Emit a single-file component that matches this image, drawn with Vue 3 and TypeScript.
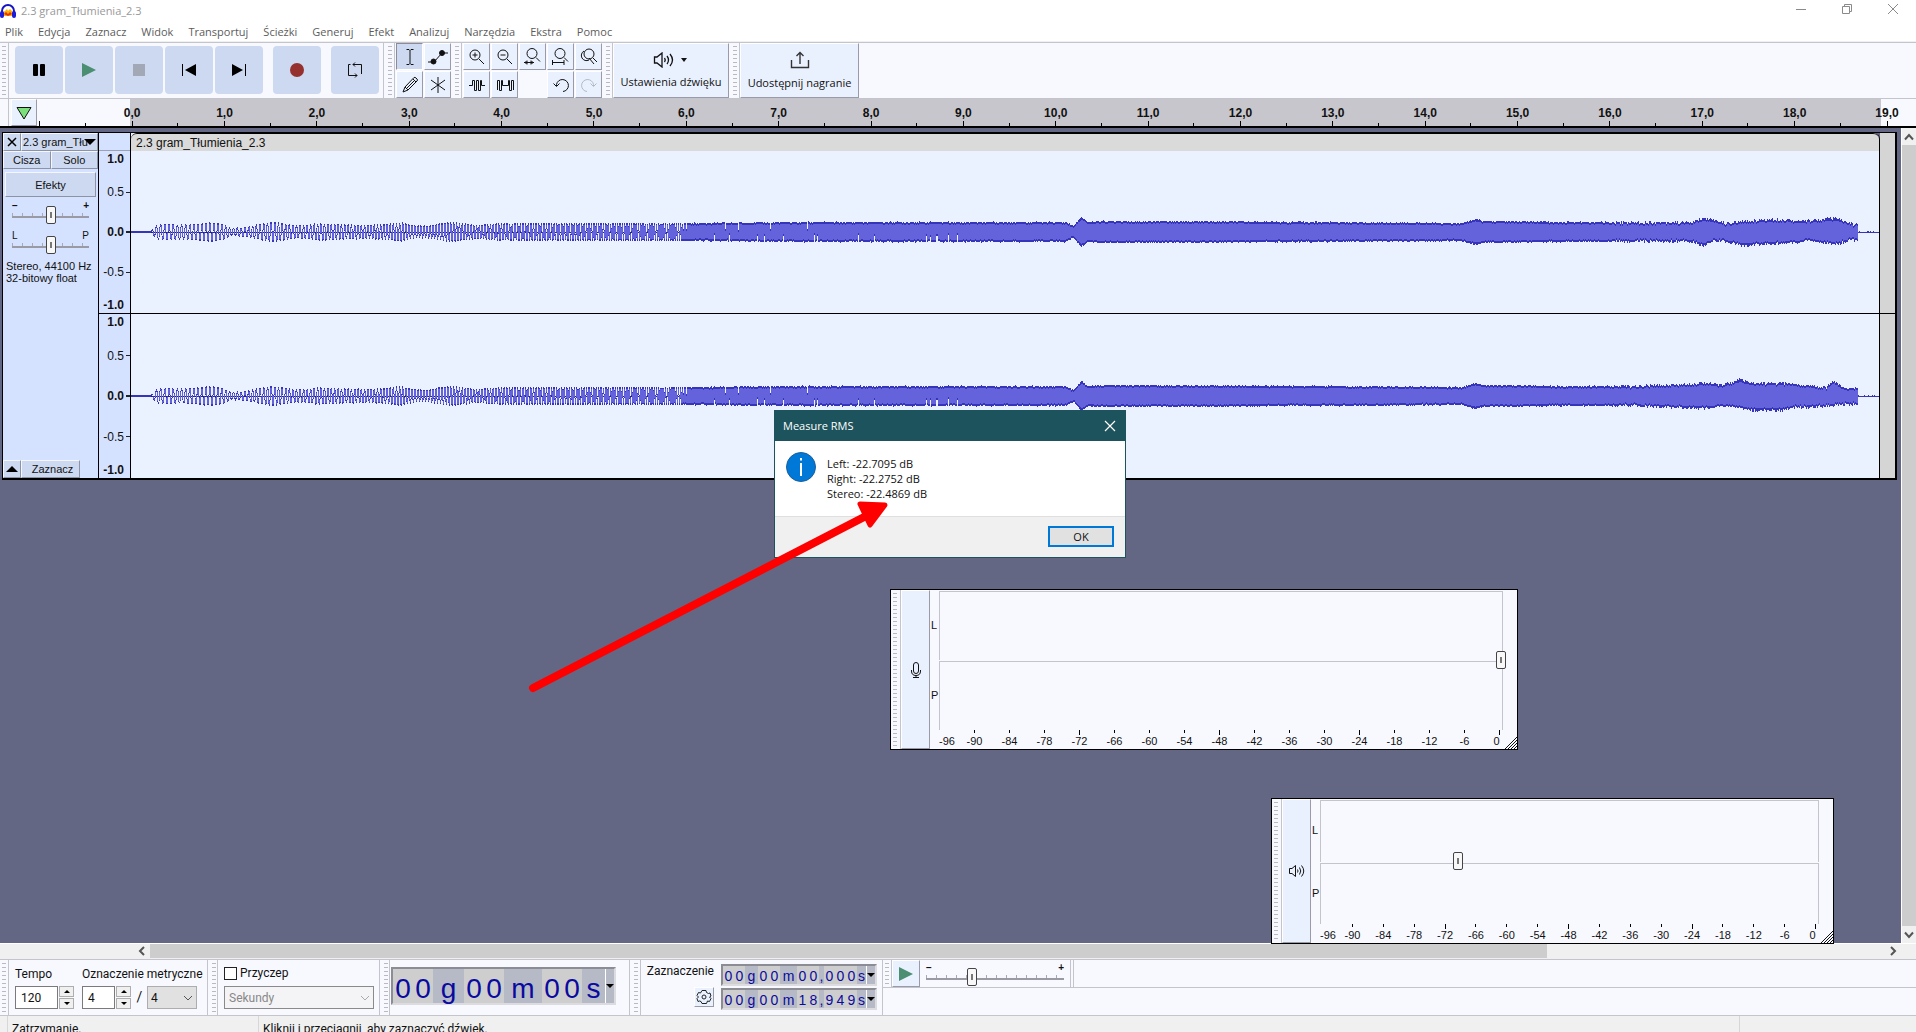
<script setup lang="ts">
import { ref } from 'vue'

type Point = [number, number]

const menus = ['Plik', 'Edycja', 'Zaznacz', 'Widok', 'Transportuj', 'Ścieżki', 'Generuj', 'Efekt', 'Analizuj', 'Narzędzia', 'Ekstra', 'Pomoc']
const seconds = Array.from({ length: 20 }, (_, i) => `${i},0`)
const decibels = Array.from({ length: 16 }, (_, i) => -90 + i * 6)
const levels = ['1.0', '0.5', '0.0', '-0.5', '-1.0']

const tempo = ref('120')
const beats = ref('4')
const recordLevel = ref(100)
const playLevel = ref(27)
const gain = ref(50)
const pan = ref(50)
const speed = ref(32)

const WAVE_WIDTH = 1748

const early: Point[] = [[0, 1], [19, 1], [21, 3], [26, 8], [60, 8], [80, 10], [92, 8], [100, 4], [115, 5], [128, 8], [138, 10], [150, 9], [162, 7], [175, 7], [188, 9], [205, 8], [235, 7], [255, 8], [270, 10], [280, 7], [296, 6], [310, 9], [322, 10], [345, 7], [370, 9], [500, 9], [569, 9], [669, 10], [934, 10], [942, 6], [950, 15], [957, 10], [969, 11], [1205, 10], [1330, 9], [1344, 13], [1352, 11], [1440, 10], [1500, 10]]
const upper1: Point[] = [...early, [1560, 10], [1572, 14], [1588, 11], [1594, 9], [1615, 11], [1625, 12], [1645, 13], [1655, 13], [1670, 11], [1689, 13], [1704, 14], [1714, 11], [1722, 8], [1726, 8]]
const lower1: Point[] = [...early, [1560, 10], [1572, 14], [1584, 9], [1600, 11], [1611, 14], [1645, 12], [1665, 11], [1676, 9], [1690, 11], [1705, 13], [1714, 10], [1719, 8], [1726, 9]]
const upper2: Point[] = [...early, [1550, 12], [1574, 14], [1588, 11], [1600, 14], [1609, 17], [1620, 13], [1660, 13], [1672, 11], [1695, 9], [1703, 16], [1710, 9], [1726, 8]]
const lower2: Point[] = [...early, [1550, 12], [1574, 13], [1588, 11], [1600, 11], [1621, 15], [1650, 15], [1665, 12], [1690, 11], [1704, 10], [1726, 8]]

function envelope(points: Point[], x: number): number {
  for (let i = 1; i < points.length; i++) {
    const [x1, y1] = points[i]
    if (x <= x1) {
      const [x0, y0] = points[i - 1]
      return y0 + ((y1 - y0) * (x - x0)) / (x1 - x0)
    }
  }
  return 1
}

function noise(n: number): number {
  const s = Math.sin(n * 12.9898) * 43758.5453
  return s - Math.floor(s)
}

// One column per pixel: a rising sweep whose cycles merge into a solid band.
function buildWave(up: Point[], down: Point[], middle: number, seed: number) {
  let peaks = ''
  let body = ''
  for (let x = 0; x < WAVE_WIDTH; x++) {
    let hi = 0
    let lo = 0
    if (x > 1726) {
      hi = noise(x + seed) > 0.8 ? 1 : 0
      lo = -1
    } else if (x < 20) {
      hi = 1
      lo = -1
    } else {
      hi = -1
      lo = 1
      if (x > 550) {
        hi = x < 700 && noise(x * 3) < 0.05 ? 0.3 : 1
        lo = x < 830 && noise(x * 5) < 0.04 ? -0.4 : -1
      } else {
        for (let k = 0; k <= 8; k++) {
          const t = x - 20 + k / 8
          const v = Math.sin((2 * Math.PI * (Math.exp(0.0013 * t) - 1)) / (4.3 * 0.0013))
          hi = Math.max(hi, v)
          lo = Math.min(lo, v)
        }
      }
      const rough = x > 1480 ? 3 : x > 560 ? 1.4 : 1
      hi = hi * envelope(up, x) + (hi > 0 ? (noise(x + seed) - 0.6) * rough : 0)
      lo = lo * envelope(down, x) - (lo < 0 ? (noise(x + seed + 400) - 0.6) * rough : 0)
      if (hi - lo < 1) hi = lo + 1
    }
    const top = Math.round(middle - hi)
    const bottom = Math.max(top + 1, Math.round(middle - lo))
    peaks += `M${x}.5 ${top}V${bottom}`
    const inset = x > 550 ? 2 : 1
    const cap = Math.round(envelope(up, x) * 0.82)
    const cup = Math.round(envelope(down, x) * 0.82)
    const a = Math.max(top + inset, middle - cap)
    const b = Math.min(bottom - inset, middle + cup)
    if (b > a && x <= 1726) body += `M${x}.5 ${a}V${b}`
  }
  return { peaks, body }
}

const channels = [
  { id: 'left', height: 162, middle: 81, ...buildWave(upper1, lower1, 81, 3) },
  { id: 'right', height: 164, middle: 82, ...buildWave(upper2, lower2, 82, 91) },
]

const bigTime = [
  { t: '00', u: 'g' },
  { t: '00', u: 'm' },
  { t: '00', u: 's' },
]
const selectionTimes = [
  { id: 'start', parts: [{ t: '00', u: 'g' }, { t: '00', u: 'm' }, { t: '00', u: ',' }, { t: '000', u: 's' }] },
  { id: 'end', parts: [{ t: '00', u: 'g' }, { t: '00', u: 'm' }, { t: '18', u: ',' }, { t: '949', u: 's' }] },
]
</script>

<template>
  <div class="app">
    <header class="titlebar">
      <svg class="logo" viewBox="0 0 16 16" width="16" height="16" aria-hidden="true">
        <path d="M3 9 5 8 7 6 8 8 10 6 13 9 13 13 3 13Z" fill="#ffb000" />
        <path d="M4 11 6 9 8 11 10 9 12 11 8 13Z" fill="#e33412" />
        <path d="M2 11V8a6 6 0 0 1 12 0v3" fill="none" stroke="#1414c8" stroke-width="2" />
        <rect x="0" y="8" width="4" height="7" rx="2" fill="#1c1cd8" />
        <rect x="12" y="8" width="4" height="7" rx="2" fill="#1c1cd8" />
      </svg>
      <span class="title">2.3 gram_Tłumienia_2.3</span>
      <div class="window-buttons">
        <button type="button" aria-label="Minimalizuj"><svg width="12" height="12" viewBox="0 0 12 12"><path d="M1 6.5H11" /></svg></button>
        <button type="button" aria-label="Przywróć"><svg width="12" height="12" viewBox="0 0 12 12"><path d="M1.500 3.500H8.500V10.500H1.500ZM3.500 3.500V1.500H10.500V8.500H8.500" /></svg></button>
        <button type="button" aria-label="Zamknij"><svg width="12" height="12" viewBox="0 0 12 12"><path d="M1 1 11 11M11 1 1 11" /></svg></button>
      </div>
    </header>

    <nav class="menubar">
      <button v-for="m in menus" :key="m" type="button">{{ m }}</button>
    </nav>

    <section class="toolbar">
      <span class="grip"></span>
      <div class="transport">
        <button type="button" aria-label="Pauza"><svg width="14" height="14" viewBox="0 0 14 14"><rect x="1" y="1" width="5" height="12" rx="1" /><rect x="8" y="1" width="5" height="12" rx="1" /></svg></button>
        <button type="button" aria-label="Odtwórz"><svg width="16" height="16" viewBox="0 0 16 16"><path d="M1 1 15 8 1 15Z" fill="#4b8e72" /></svg></button>
        <button type="button" aria-label="Zatrzymaj"><svg width="12" height="12" viewBox="0 0 12 12"><rect width="12" height="12" fill="#a2a8b6" /></svg></button>
        <button type="button" aria-label="Do początku"><svg width="14" height="12" viewBox="0 0 14 12"><path d="M0 0H1V12H0ZM14 0V12L3 6Z" /></svg></button>
        <button type="button" aria-label="Do końca"><svg width="14" height="12" viewBox="0 0 14 12"><path d="M13 0H14V12H13ZM0 0V12L11 6Z" /></svg></button>
        <button type="button" class="apart" aria-label="Nagraj"><svg width="14" height="14" viewBox="0 0 14 14"><circle cx="7" cy="7" r="7" fill="#96302f" /></svg></button>
        <button type="button" class="apart" aria-label="Pętla"><svg width="16" height="16" viewBox="0 0 16 16" fill="none" stroke="#111"><path d="M3.500 2.500H1.500V13.500H10M14.500 12V2.500H6M8 .5 6 2.500 8 4.500M8 11.500 10 13.500 8 15.500" /></svg></button>
      </div>
      <span class="grip double"></span>
      <div class="tools two">
        <button type="button" class="pressed" aria-label="Zaznaczanie"><svg width="20" height="20" viewBox="0 0 20 20"><path d="M6.500 2.500H9L10 3.500 11 2.500H13.500M10 3.500V16.500M6.500 17.500H9L10 16.500 11 17.500H13.500" /></svg></button>
        <button type="button" aria-label="Obwiednia"><svg width="20" height="20" viewBox="0 0 20 20"><path d="M0 15H6L14 6H20" /><circle cx="5.500" cy="14.500" r="2.500" fill="#111" /><circle cx="14" cy="6" r="2.500" fill="#111" /></svg></button>
        <button type="button" aria-label="Rysowanie"><svg width="20" height="20" viewBox="0 0 20 20"><path d="M3 17 5 12 14 2.500Q15 2 16 3L17 4Q18 5 17 6L8 15ZM13 4 16 7M5 12 8 15M6.500 13.500 14 6" /></svg></button>
        <button type="button" aria-label="Wielonarzędzie"><svg width="20" height="20" viewBox="0 0 20 20"><path d="M10 2V18M3 5 17 15M17 5 3 15" /></svg></button>
      </div>
      <span class="grip"></span>
      <div class="tools five">
        <button type="button" aria-label="Powiększ"><svg width="20" height="20" viewBox="0 0 20 20"><circle cx="8" cy="8" r="5" /><path d="M12 12 17 17M5.500 8H10.500M8 5.500V10.500" /></svg></button>
        <button type="button" aria-label="Pomniejsz"><svg width="20" height="20" viewBox="0 0 20 20"><circle cx="8" cy="8" r="5" /><path d="M12 12 17 17M5.500 8H10.500" /></svg></button>
        <button type="button" aria-label="Dopasuj zaznaczenie"><svg width="20" height="20" viewBox="0 0 20 20"><circle cx="9" cy="6.500" r="5" /><path d="M13 10.500 17 14.500M1 15.500H11M4 13.500V17.500M8 13.500V17.500M2.500 14 4 15.500 2.500 17M9.500 14 8 15.500 9.500 17" /></svg></button>
        <button type="button" aria-label="Dopasuj projekt"><svg width="20" height="20" viewBox="0 0 20 20"><circle cx="9" cy="6.500" r="5" /><path d="M13 10.500 17 14.500M1.500 15.500H13M1.500 13V18M13 13V18" /></svg></button>
        <button type="button" aria-label="Przełącz powiększenie"><svg width="20" height="20" viewBox="0 0 20 20"><circle cx="10" cy="7" r="5" /><path d="M14 11 18 15M5 4A5 5 0 1 0 10 13M10 11 15 17" /></svg></button>
        <button type="button" aria-label="Przytnij"><svg width="20" height="20" viewBox="0 0 20 20"><path d="M2 10.500H5.500V5.500H7.500V15.500H9.500V5.500H11.500V15.500H13.500V5.500H14.500V10.500H18" /></svg></button>
        <button type="button" aria-label="Wycisz"><svg width="20" height="20" viewBox="0 0 20 20"><path d="M2.500 15V5.500H4.500V15.500H6.500V5.500H7.500V10.500H13.500V5.500H14.500V15.500H16.500V5.500H18.500V15" /></svg></button>
        <span></span>
        <button type="button" aria-label="Cofnij"><svg width="20" height="20" viewBox="0 0 20 20"><path d="M12 16.500A6 6 0 1 0 5.500 9.500V11M2.500 8.500 5.500 11.500 8.500 8.500" /></svg></button>
        <button type="button" class="faded" aria-label="Ponów"><svg width="20" height="20" viewBox="0 0 20 20"><path d="M8 16.500A6 6 0 1 1 14.500 9.500V11M17.500 8.500 14.500 11.500 11.500 8.500" /></svg></button>
      </div>
      <span class="grip"></span>
      <button type="button" class="wide audio">
        <svg width="36" height="16" viewBox="0 0 36 16" fill="none" stroke="#111"><path d="M1.500 5V11H4L9 15V1L4 5Z" stroke-width="1.300" /><path d="M11.500 6Q13 8 11.500 10M14 4Q17 8 14 12M17 2Q22 8 17 14" stroke-width="1.300" /><path d="M28 6H34L31 10Z" fill="#111" stroke="none" /></svg>
        <span>Ustawienia dźwięku</span>
      </button>
      <span class="grip"></span>
      <button type="button" class="wide share">
        <svg width="20" height="18" viewBox="0 0 20 18" fill="none" stroke="#333"><path d="M1.500 9V16.500H18.500V9M10 13V1.500M6.500 5 10 1.500 13.500 5" stroke-width="1.400" /></svg>
        <span>Udostępnij nagranie</span>
      </button>
    </section>

    <section class="timeline">
      <span class="edge"></span>
      <button type="button" class="pin" aria-label="Głowica"><svg width="18" height="16" viewBox="0 0 18 16"><path d="M2 2.500H16L9 14Z" fill="#7be07b" stroke="#111" /></svg></button>
      <span class="lead"></span>
      <span v-for="s in seconds" :key="s" class="second">{{ s }}</span>
    </section>

    <main class="workspace">
      <div class="canvas">
        <article class="track">
          <aside class="panel">
            <div class="row top">
              <button type="button" class="close" aria-label="Zamknij ścieżkę"><svg width="10" height="10" viewBox="0 0 10 10"><path d="M1 1 9 9M9 1 1 9" stroke="#000" stroke-width="1.500" /></svg></button>
              <button type="button" class="name"><span>2.3 gram_Tłumienia_2.3</span><svg width="12" height="6" viewBox="0 0 12 6"><path d="M0 0H12L6 6Z" /></svg></button>
            </div>
            <div class="row halves">
              <button type="button">Cisza</button>
              <button type="button">Solo</button>
            </div>
            <button type="button" class="effects">Efekty</button>
            <label class="knob"><span class="ends"><b>−</b><b>+</b></span><input v-model="gain" type="range" class="slider" aria-label="Wzmocnienie" /></label>
            <label class="knob"><span class="ends"><span>L</span><span>P</span></span><input v-model="pan" type="range" class="slider" aria-label="Panorama" /></label>
            <p class="format">Stereo, 44100 Hz<br />32-bitowy float</p>
            <div class="row foot">
              <button type="button" class="close" aria-label="Zwiń"><svg width="12" height="6" viewBox="0 0 12 6"><path d="M0 6H12L6 0Z" /></svg></button>
              <button type="button" class="select">Zaznacz</button>
            </div>
          </aside>
          <div class="levels">
            <div class="gap"></div>
            <div v-for="c in channels" :key="c.id" class="scale" :class="c.id">
              <span v-for="(l, i) in levels" :key="l" :class="{ strong: i % 2 === 0 }">{{ l }}</span>
            </div>
          </div>
          <div class="clip">
            <div class="clip-title">2.3 gram_Tłumienia_2.3</div>
            <svg v-for="c in channels" :key="c.id" class="wave" :class="c.id" :viewBox="`0 0 ${WAVE_WIDTH} ${c.height}`" :height="c.height" preserveAspectRatio="none" shape-rendering="crispEdges">
              <path :d="`M0 ${c.middle}.5H560`" stroke="#22226e" />
              <path :d="c.peaks" stroke="#3634b8" />
              <path :d="c.body" stroke="#6463dc" />
            </svg>
          </div>
          <div class="after"><span></span></div>
        </article>

        <section class="meter recording">
          <span class="grip"></span>
          <button type="button" class="meter-button" aria-label="Poziom nagrywania">
            <svg width="14" height="18" viewBox="0 0 14 18" fill="none" stroke="#111"><rect x="4.500" y="1.500" width="5" height="11" rx="2.500" /><path d="M2.500 9V10Q2.500 14.500 7 14.500T11.500 10V9M7 14.500V16.500M4 16.500H10" /></svg>
          </button>
          <div class="names"><span>L</span><span>P</span></div>
          <div class="bars">
            <div class="bar"></div>
            <div class="bar"></div>
            <input v-model="recordLevel" type="range" class="slider bare" aria-label="Głośność nagrywania" />
            <div class="db"><span class="first">-96</span><span v-for="d in decibels" :key="d" class="tick" :class="{ long: d % 24 === 0 }">{{ d }}</span></div>
          </div>
          <svg class="corner" width="12" height="12" viewBox="0 0 12 12"><path d="M0 12 12 0M3 12 12 3M6 12 12 6M9 12 12 9" stroke="#111" /></svg>
        </section>

        <section class="meter playback">
          <span class="grip"></span>
          <button type="button" class="meter-button" aria-label="Poziom odtwarzania">
            <svg width="18" height="14" viewBox="0 0 18 14" fill="none" stroke="#111"><path d="M1.500 4.500V9.500H4L7.500 12.500V1.500L4 4.500Z" /><path d="M9.500 5.500Q10.500 7 9.500 8.500M11.500 3.500Q14 7 11.500 10.500M13.500 1.500Q18 7 13.500 12.500" /></svg>
          </button>
          <div class="names"><span>L</span><span>P</span></div>
          <div class="bars">
            <div class="bar"></div>
            <div class="bar"></div>
            <input v-model="playLevel" type="range" class="slider bare" aria-label="Głośność odtwarzania" />
            <div class="db"><span class="first">-96</span><span v-for="d in decibels" :key="d" class="tick" :class="{ long: d % 24 === 0 }">{{ d }}</span></div>
          </div>
          <svg class="corner" width="12" height="12" viewBox="0 0 12 12"><path d="M0 12 12 0M3 12 12 3M6 12 12 6M9 12 12 9" stroke="#111" /></svg>
        </section>

        <div class="dialog" role="dialog" aria-label="Measure RMS">
          <div class="dialog-head">
            <span>Measure RMS</span>
            <button type="button" aria-label="Zamknij okno"><svg width="12" height="12" viewBox="0 0 12 12"><path d="M1 1 11 11M11 1 1 11" stroke="#fff" stroke-width="1.200" /></svg></button>
          </div>
          <div class="dialog-body">
            <svg width="30" height="30" viewBox="0 0 30 30"><circle cx="15" cy="15" r="14.500" fill="#0078d7" stroke="#1a5f9c" /><path d="M15 11V24M15 6V8.500" stroke="#fff" stroke-width="2" /></svg>
            <p>Left: -22.7095 dB<br />Right: -22.2752 dB<br />Stereo: -22.4869 dB</p>
          </div>
          <div class="dialog-foot"><button type="button">OK</button></div>
        </div>

        <svg class="arrow" width="360" height="192" viewBox="0 0 360 192" aria-hidden="true">
          <path d="M5 187 340 14" stroke="#fe0000" stroke-width="8" stroke-linecap="round" />
          <path d="M332 3 357 4 342 24Z" fill="#fe0000" stroke="#fe0000" stroke-width="5" stroke-linejoin="round" />
        </svg>
      </div>
      <div class="vscroll">
        <button type="button" aria-label="W górę"><svg width="10" height="8" viewBox="0 0 10 8"><path d="M1 6.500 5 2 9 6.500" /></svg></button>
        <span class="thumb"></span>
        <button type="button" aria-label="W dół"><svg width="10" height="8" viewBox="0 0 10 8"><path d="M1 1.500 5 6 9 1.500" /></svg></button>
      </div>
    </main>

    <div class="hscroll">
      <button type="button" aria-label="W lewo"><svg width="8" height="10" viewBox="0 0 8 10"><path d="M6 1 2 5 6 9" /></svg></button>
      <span class="thumb"></span>
      <button type="button" aria-label="W prawo"><svg width="8" height="10" viewBox="0 0 8 10"><path d="M2 1 6 5 2 9" /></svg></button>
    </div>

    <section class="bottom">
      <span class="grip"></span>
      <div class="signature">
        <div class="field">
          <label for="tempo">Tempo</label>
          <div class="line">
            <input id="tempo" v-model="tempo" class="box tempo" type="text" />
            <span class="spin"><button type="button" aria-label="Więcej"></button><button type="button" aria-label="Mniej"></button></span>
          </div>
        </div>
        <div class="field">
          <label for="beats">Oznaczenie metryczne</label>
          <div class="line">
            <input id="beats" v-model="beats" class="box beats" type="text" />
            <span class="spin"><button type="button" aria-label="Więcej"></button><button type="button" aria-label="Mniej"></button></span>
            <span class="slash">/</span>
            <span class="pick"><select class="box note" aria-label="Wartość nuty"><option>4</option></select><svg width="10" height="6" viewBox="0 0 10 6"><path d="M1 1 5 5 9 1" /></svg></span>
          </div>
        </div>
      </div>
      <span class="grip bordered"></span>
      <div class="snap">
        <label class="check"><input type="checkbox" />Przyczep</label>
        <span class="pick dim"><select class="box unit" disabled aria-label="Jednostka przyczepiania"><option>Sekundy</option></select><svg width="10" height="6" viewBox="0 0 10 6"><path d="M1 1 5 5 9 1" /></svg></span>
      </div>
      <span class="grip bordered"></span>
      <div class="clock">
        <div class="time big">
          <template v-for="(p, i) in bigTime" :key="i">
            <span class="digits"><i v-for="(ch, k) in p.t" :key="k">{{ ch }}</i></span><span class="unit-mark" :class="p.u">{{ p.u }}</span>
          </template>
          <button type="button" class="drop" aria-label="Format czasu"></button>
        </div>
      </div>
      <span class="grip double"></span>
      <div class="selection">
        <div class="selection-name">
          <span>Zaznaczenie</span>
          <button type="button" aria-label="Ustawienia zaznaczenia"><svg width="16" height="16" viewBox="0 0 16 16" fill="none" stroke="#222"><path d="M6 1.500H10L10.500 3.500 12.500 4.500 14 4 15 7 13.500 8 15 9.500 13.500 12.500 11.500 12 10.500 14.500H6L5 12.500 3.500 12 2 12.500 1 9.500 2.500 8 1 6.500 2.500 3.500 4.500 4Z" /><circle cx="8" cy="8" r="2" /></svg></button>
        </div>
        <div class="times">
          <div v-for="t in selectionTimes" :key="t.id" class="time small">
            <template v-for="(p, i) in t.parts" :key="i">
              <span class="digits"><i v-for="(ch, k) in p.t" :key="k">{{ ch }}</i></span><span class="unit-mark" :class="p.u === ',' ? 'comma' : p.u">{{ p.u }}</span>
            </template>
            <button type="button" class="drop" aria-label="Format czasu"></button>
          </div>
        </div>
      </div>
      <div class="rest">
        <div class="speed-row">
          <span class="grip"></span>
          <button type="button" class="play" aria-label="Odtwórz z prędkością"><svg width="16" height="16" viewBox="0 0 16 16"><path d="M1 1 15 8 1 15Z" fill="#4b8e72" /></svg></button>
          <label class="knob speed"><span class="ends"><b>−</b><b>+</b></span><input v-model="speed" type="range" class="slider" aria-label="Prędkość" /></label>
          <span class="stop"></span>
        </div>
      </div>
    </section>

    <footer class="status">
      <span class="state">Zatrzymanie.</span>
      <span class="hint">Kliknij i przeciągnij, aby zaznaczyć dźwięk.</span>
      <span class="rate"></span>
    </footer>
  </div>
</template>

<style>
body {
  overflow: hidden;
}
</style>

<style scoped>
.app {
  display: flex;
  flex-direction: column;
  height: 100vh;
  overflow: hidden;
  background: #f8f9ff;
  color: #111;
  font: 11px/16px "Open Sans", sans-serif;
}
.app * {
  box-sizing: border-box;
}
button {
  display: flex;
  align-items: center;
  justify-content: center;
  padding: 0;
  border: 0;
  background: none;
  color: inherit;
  font: inherit;
}
svg {
  display: block;
  flex: none;
}
.titlebar {
  display: flex;
  align-items: center;
  flex: none;
  height: 22px;
  background: #fff;
  color: #999;
}
.logo {
  margin-right: 5px;
}
.window-buttons {
  display: flex;
  align-self: flex-start;
  margin-left: auto;
}
.window-buttons button {
  width: 46px;
  height: 18px;
}
.window-buttons svg {
  fill: none;
  stroke: #8a8a8a;
}
.menubar {
  display: flex;
  flex: none;
  gap: 15px;
  height: 20px;
  padding-left: 5px;
  border-bottom: 1px solid #f0f0f0;
  background: #fff;
  color: #5c5c5c;
}
.toolbar {
  display: flex;
  flex: none;
  height: 57px;
  border-top: 1px solid #c4c4cc;
  border-bottom: 1px solid #c4c4cc;
}
.grip {
  flex: none;
  width: 9px;
  border-right: 1px solid #c4c4cc;
  background: repeating-linear-gradient(#b9b9c4 0 1px, transparent 1px 4px) no-repeat 2px 3px / 4px calc(100% - 6px);
}
.transport {
  display: flex;
  gap: 2px;
  align-items: flex-start;
  padding: 3px 4px 0 6px;
}
.transport button {
  width: 48px;
  height: 48px;
  border-radius: 4px;
  background: #cdd9f0;
}
.transport .apart {
  margin-left: 8px;
}
.grip.double {
  width: 12px;
  border-left: 1px solid #c4c4cc;
  background-position: 4px 3px;
}
.tools {
  display: grid;
  grid-auto-rows: 27px;
  gap: 1px;
  padding: 0 2px 0 1px;
}
.two {
  grid-template-columns: 27px 27px;
}
.five {
  grid-template-columns: repeat(5, 27px);
}
.tools button,
.wide,
.pin,
.meter-button,
.play,
.selection-name button {
  border: 1px solid #fff;
  border-right-color: #9a9aa8;
  border-bottom-color: #9a9aa8;
  background: #eaf1fe;
}
.tools svg {
  fill: none;
  stroke: #111;
}
.tools .pressed {
  border-color: #8c8c98 #fff #fff #8c8c98;
  background: #cdd9f0;
}
.tools .faded svg {
  stroke: #b4b8c4;
}
.wide {
  flex-direction: column;
  gap: 6px;
  margin-right: 2px;
}
.audio {
  width: 116px;
}
.share {
  width: 119px;
}
.timeline {
  display: flex;
  flex: none;
  height: 29px;
  overflow: hidden;
  border-bottom: 2px solid #000;
  background: linear-gradient(#c6c6cc, #c6c6cc) no-repeat 130px 0 / calc(100% - 165px) 100%;
  font: bold 12px/28px "Liberation Sans", sans-serif;
}
.edge {
  flex: none;
  width: 9px;
  margin-right: 2px;
  border-right: 1px solid #c4c4cc;
}
.pin {
  flex: none;
  width: 26px;
}
.lead {
  flex: none;
  width: 49px;
  background: linear-gradient(#000, #000) no-repeat 2px 100% / 1px 5px, linear-gradient(#000, #000) no-repeat 100% 100% / 1px 3px;
}
.second {
  flex: none;
  width: calc((100vw - 161px) / 19);
  background: linear-gradient(#000, #000) no-repeat 50% 100% / 1px 5px, linear-gradient(#000, #000) no-repeat 100% 100% / 1px 3px;
  text-align: center;
}
.workspace {
  display: flex;
  flex: 1;
  min-height: 0;
}
.canvas {
  position: relative;
  flex: 1;
  min-width: 0;
  padding: 4px 4px 0 2px;
  background: #636784;
}
.track {
  display: flex;
  border: 1px solid #000;
  border-width: 1px 2px 2px 1px;
  font: 11px/14px "Liberation Sans", sans-serif;
}
.panel {
  display: flex;
  flex: none;
  flex-direction: column;
  width: 96px;
  border-right: 1px solid #000;
  background: #d5e2ff;
}
.row {
  display: flex;
}
.row button,
.effects {
  height: 18px;
  border: 1px solid #f4f7ff;
  border-right-color: #8c94a4;
  border-bottom-color: #8c94a4;
  background: #cdd9f0;
}
.row .close {
  flex: none;
  width: 18px;
}
.row .name {
  flex: 1;
  min-width: 0;
  padding: 0 1px;
}
.name span {
  flex: 1;
  overflow: hidden;
  white-space: nowrap;
}
.name svg {
  margin-left: -4px;
}
.halves button {
  flex: 1;
}
.panel .effects {
  height: 25px;
  margin: 3px 2px 5px;
}
.knob {
  display: block;
  height: 30px;
  padding: 0 9px;
}
.ends {
  display: flex;
  justify-content: space-between;
  height: 7px;
  font: 10px/7px "Liberation Sans", sans-serif;
}
.slider {
  display: block;
  width: 100%;
  height: 18px;
  margin: 0;
  appearance: none;
  background: linear-gradient(#9a9aa4, #9a9aa4) no-repeat 0 10px / 100% 2px, repeating-linear-gradient(90deg, #aaaab4 0 1px, transparent 1px 10px) no-repeat 0 7px / 100% 3px;
}
.knob .slider {
  margin-top: -3px;
}
.slider::-webkit-slider-thumb {
  width: 10px;
  height: 18px;
  appearance: none;
  border: 1px solid #444;
  border-radius: 2px;
  background: linear-gradient(#777, #777) no-repeat 50% 50% / 2px 6px, #f8f8f8;
}
.slider.bare {
  background: none;
}
.format {
  margin: -2px 0 0;
  padding-left: 3px;
  line-height: 12px;
  white-space: nowrap;
}
.foot {
  margin-top: auto;
}
.foot .select {
  width: 59px;
  padding-left: 4px;
}
.levels {
  flex: none;
  width: 32px;
  border-right: 1px solid #000;
  background: #d5e2ff;
  font-size: 12px;
}
.gap {
  height: 18px;
  border-bottom: 1px solid #9aa2b4;
}
.scale {
  display: grid;
  grid-template-rows: 16px 1fr 30px 1fr 16px;
  align-items: center;
  height: 162px;
  text-align: right;
}
.scale.right {
  height: 165px;
  border-top: 1px solid #000;
}
.scale span {
  padding-right: 6px;
  background: linear-gradient(#222, #222) no-repeat 100% 50% / 4px 1px;
}
.scale .strong {
  font-weight: bold;
  background-size: 4px 2px;
}
.scale span:first-child,
.scale span:last-child {
  background: none;
}
.clip {
  flex: 1;
  min-width: 0;
  border-right: 1px solid #000;
  border-top-right-radius: 6px;
  background: #eaf2ff;
}
.clip-title {
  height: 18px;
  padding-left: 5px;
  border-top: 1px solid #000;
  border-radius: 6px 6px 0 0;
  background: #dadada;
  font-size: 12px;
  line-height: 18px;
}
.wave {
  width: 100%;
  fill: none;
}
.wave.right {
  height: 165px;
  border-top: 1px solid #000;
}
.after {
  flex: none;
  width: 15px;
  background: #d5d5d5;
}
.after span {
  display: block;
  height: 181px;
  border-bottom: 1px solid #000;
}
.vscroll {
  display: flex;
  flex: none;
  flex-direction: column;
  width: 15px;
  border-left: 1px solid #fff;
  background: #f0f0f0;
}
.vscroll button {
  flex: none;
  height: 17px;
}
.vscroll svg,
.hscroll svg {
  fill: none;
  stroke: #555;
  stroke-width: 2;
}
.vscroll .thumb {
  flex: 1;
  background: #cdcdcd;
}
.hscroll {
  display: flex;
  flex: none;
  height: 16px;
  padding: 0 15px 1px 133px;
  border-top: 1px solid #fff;
  background: #f0f0f0;
}
.hscroll button {
  flex: none;
  width: 17px;
}
.hscroll .thumb {
  width: 79%;
  margin-right: auto;
  background: #cdcdcd;
}
.meter {
  position: absolute;
  display: flex;
  border: 1px solid #000;
  background: #f8f9ff;
  font: 11px/12px "Liberation Sans", sans-serif;
}
.recording {
  top: 461px;
  left: 890px;
  width: 628px;
  height: 161px;
}
.playback {
  top: 670px;
  left: 1271px;
  width: 563px;
  height: 146px;
}
.meter .grip {
  width: 10px;
}
.meter-button {
  width: 29px;
}
.names {
  display: flex;
  flex-direction: column;
  width: 9px;
  padding: 0 0 19px 1px;
}
.names span {
  display: flex;
  flex: 1;
  align-items: center;
  justify-content: flex-start;
}
.bars {
  position: relative;
  display: flex;
  flex: 1;
  flex-direction: column;
}
.bar {
  flex: 1;
  margin: 1px 14px 0 0;
  border: 1px solid #c4c4cc;
  border-bottom: 0;
}
.bars .slider {
  position: absolute;
  top: calc(50% - 19px);
  right: 11px;
  left: 0;
  width: auto;
}
.db {
  display: flex;
  height: 19px;
}
.db .first {
  width: 18px;
  padding-top: 5px;
}
.playback .db {
  padding-right: 2px;
}
.playback .first {
  width: 17px;
}
.tick {
  flex: 1 1 0;
  min-width: 0;
  padding-top: 5px;
  background: linear-gradient(#000, #000) no-repeat 50% 0 / 1px 3px;
  text-align: center;
}
.tick.long {
  background-size: 1px 5px;
}
.tick:last-child {
  text-indent: -6px;
}
.corner {
  position: absolute;
  right: 0;
  bottom: 0;
}
.dialog {
  position: absolute;
  top: 282px;
  left: 774px;
  width: 352px;
  border: 1px solid #1c535c;
  background: #fff;
}
.dialog-head {
  display: flex;
  align-items: center;
  justify-content: space-between;
  height: 30px;
  padding: 0 9px 0 8px;
  background: #1c535c;
  color: #fff;
}
.dialog-body {
  display: flex;
  gap: 11px;
  height: 75px;
  padding: 11px;
}
.dialog-body p {
  margin: 4px 0 0;
  line-height: 15px;
}
.dialog-foot {
  display: flex;
  justify-content: flex-end;
  height: 41px;
  padding: 9px 11px;
  border-top: 1px solid #dfdfdf;
  background: #f0f0f0;
}
.dialog-foot button {
  width: 66px;
  height: 21px;
  border: 2px solid #0078d7;
  background: #e1e1e1;
}
.arrow {
  position: absolute;
  top: 373px;
  left: 528px;
}
.bottom {
  display: flex;
  flex: none;
  height: 57px;
  border-top: 1px solid #c4c4cc;
  border-bottom: 1px solid #c4c4cc;
  font: 12px/16px Roboto, sans-serif;
}
.signature {
  display: flex;
  gap: 7px;
  width: 198px;
  padding: 6px 0 0 6px;
}
.field {
  white-space: nowrap;
}
.field label {
  display: block;
  height: 20px;
}
.line {
  display: flex;
  gap: 1px;
}
.box {
  height: 23px;
  padding: 0 5px;
  border: 1px solid #7a7a7a;
  border-radius: 0;
  background: #fff;
  color: #111;
  font: inherit;
}
.tempo {
  width: 43px;
}
.beats {
  width: 33px;
}
.spin {
  display: flex;
  flex-direction: column;
  gap: 1px;
  width: 15px;
  margin-right: 1px;
}
.spin button {
  flex: 1;
  border: 1px solid #adadad;
  background: #f0f0f0;
}
.spin button::before,
.drop::before {
  border: solid transparent;
  border-width: 0 3px 3px;
  border-bottom-color: #000;
  content: "";
}
.spin button:last-child::before {
  border-width: 3px 3px 0;
  border-top-color: #000;
}
.slash {
  width: 13px;
  font-size: 14px;
  line-height: 22px;
  text-align: center;
}
.pick {
  position: relative;
  display: flex;
}
.pick svg {
  position: absolute;
  top: 9px;
  right: 4px;
  fill: none;
  stroke: #555;
  pointer-events: none;
}
.pick.dim svg {
  stroke: #aaa;
}
select.box {
  appearance: none;
  background: #e1e1e1;
}
.box.note {
  width: 50px;
  padding: 0 3px;
  border-color: #adadad;
}
.grip.bordered {
  width: 11px;
  border-left: 1px solid #c4c4cc;
  background-position: 4px 3px;
}
.snap {
  padding: 5px 5px 0 6px;
}
.check {
  display: flex;
  gap: 3px;
  align-items: center;
  height: 16px;
  margin-bottom: 5px;
}
.check input {
  width: 13px;
  height: 13px;
  margin: 0;
  appearance: none;
  border: 1px solid #222;
  background: #fff;
}
select.unit {
  width: 150px;
  padding: 0 4px;
  border-color: #8a8a8a;
  background: #f4f4f6;
  color: #888;
  opacity: 1;
}
.clock {
  padding: 7px 13px 0 1px;
}
.time {
  display: flex;
  border: 2px solid #8c8c94;
  border-right-color: #dcdce0;
  border-bottom-color: #dcdce0;
  background: #b6bac6;
  color: #0a0aa0;
  font-family: "Liberation Sans", sans-serif;
}
.digits {
  display: flex;
  background: #cecece;
}
.digits i,
.unit-mark {
  font-style: normal;
  text-align: center;
}
.big {
  height: 38px;
  font-size: 28px;
  line-height: 40px;
}
.big .digits i {
  width: 20px;
}
.big .g {
  width: 31px;
}
.big .m {
  width: 38px;
}
.big .s {
  width: 23px;
}
.drop {
  width: 9px;
  border-left: 1px solid #fff;
}
.drop::before {
  border-width: 4px 4px 0;
  border-top-color: #000;
}
.selection {
  display: flex;
  gap: 7px;
  padding-right: 5px;
  border-right: 1px solid #c4c4cc;
}
.selection-name {
  display: flex;
  flex-direction: column;
  gap: 8px;
  align-items: flex-end;
  width: 73px;
  padding-top: 3px;
}
.selection-name button {
  width: 20px;
  height: 20px;
}
.times {
  display: flex;
  flex-direction: column;
  gap: 2px;
  padding-top: 4px;
}
.small {
  height: 22px;
  font-size: 14px;
  line-height: 20px;
}
.small .digits i {
  width: 11px;
}
.small .g {
  width: 13px;
}
.small .m {
  width: 17px;
}
.small .comma {
  width: 5px;
}
.small .s {
  width: 9px;
}
.rest {
  flex: 1;
}
.speed-row {
  display: flex;
  height: 28px;
  border-bottom: 1px solid #c4c4cc;
}
.play {
  width: 28px;
}
.speed {
  width: 150px;
  padding: 4px 6px 0;
}
.stop {
  width: 4px;
  border: solid #c4c4cc;
  border-width: 0 1px;
}
.status {
  display: flex;
  flex: none;
  height: 16px;
  padding-left: 7px;
  background: #f0f0f0;
  font: 12px/26px Roboto, sans-serif;
  white-space: nowrap;
}
.status span {
  padding-left: 4px;
  border-left: 1px solid #d7d7d7;
}
.state {
  width: 251px;
}
.hint {
  flex: 1;
}
.rate {
  width: 177px;
}
</style>
